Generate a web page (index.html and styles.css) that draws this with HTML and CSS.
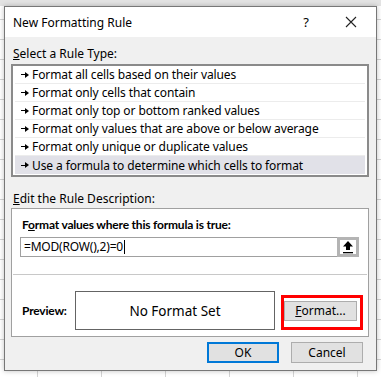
FILE: index.html
```html
<!DOCTYPE html>
<html lang="en">
<head>
    <meta charset="UTF-8">
    <title>New Formatting Rule</title>
    <link rel="stylesheet" href="styles.css">
</head>
<body>
    <div class="dialog">
        <div class="titlebar">
            <span class="title">New Formatting Rule</span>
            <span class="help">?</span>
            <svg class="close" width="12" height="12" viewBox="0 0 12 12">
                <path d="M1 1 L11 11 M11 1 L1 11" stroke="#222" stroke-width="1.1" fill="none"/>
            </svg>
        </div>
        <div class="content">
            <div class="label"><u>S</u>elect a Rule Type:</div>
            <div class="listbox">
                <div class="row"><span class="arrow"></span>Format all cells based on their values</div>
                <div class="row"><span class="arrow"></span>Format only cells that contain</div>
                <div class="row"><span class="arrow"></span>Format only top or bottom ranked values</div>
                <div class="row"><span class="arrow"></span>Format only values that are above or below average</div>
                <div class="row"><span class="arrow"></span>Format only unique or duplicate values</div>
                <div class="row selected"><span class="arrow"></span>Use a formula to determine which cells to format</div>
            </div>

            <div class="label edit-label"><u>E</u>dit the Rule Description:</div>
            <div class="group">
                <div class="bold-label">F<u>o</u>rmat values where this formula is true:</div>
                <div class="formula">
                    <div class="formula-input">=MOD(ROW(),2)=0<span class="caret"></span></div>
                    <div class="collapse-btn">
                        <svg width="12" height="14" viewBox="0 0 12 14">
                            <path d="M6 1 L11 6.5 H8 V10 H4 V6.5 H1 Z" fill="#000"/>
                            <rect x="1" y="12" width="10" height="1.3" fill="#000"/>
                        </svg>
                    </div>
                </div>
                <div class="separator"></div>
                <div class="preview-row">
                    <div class="bold-label preview-label">Preview:</div>
                    <div class="preview-box">No Format Set</div>
                    <div class="format-wrap">
                        <button class="btn format-btn"><u>F</u>ormat...</button>
                        <div class="highlight"></div>
                    </div>
                </div>
            </div>

            <div class="actions">
                <button class="btn default">OK</button>
                <button class="btn">Cancel</button>
            </div>
        </div>
    </div>
</body>
</html>
```

FILE: styles.css
```css
body {
    margin: 0;
    padding: 6px 0 0 4px;
    height: 377px;
    box-sizing: border-box;
    overflow: hidden;
    font-family: "Noto Sans", Arial, sans-serif;
    font-size: 12px;
    color: #000;
    background-color: #fff;
    background-image:
        linear-gradient(#e3e3e3, #e3e3e3),
        repeating-linear-gradient(90deg, transparent 0, transparent 37px, #d4d4d4 37px, #d4d4d4 38px, transparent 38px, transparent 64px),
        repeating-linear-gradient(180deg, transparent 0, transparent 19px, #d4d4d4 19px, #d4d4d4 20px);
    background-size: 100% 6px, 100% 100%, 100% 100%;
    background-repeat: no-repeat, repeat, repeat;
}
.dialog {
    width: 373px;
    height: 365px;
    box-sizing: border-box;
    border: 1px solid #777;
    background-color: #f0f0f0;
    box-shadow: 0 0 5px rgba(0, 0, 0, 0.25);
}
.titlebar {
    height: 30px;
    background-color: #fff;
    display: flex;
    align-items: center;
    padding-left: 8px;
}
.title {
    flex: 1;
    font-size: 12px;
}
.help {
    font-size: 13px;
    margin-right: 36px;
}
.close {
    margin-right: 19px;
}
.content {
    padding: 9px 7px 0 6px;
}
.label {
    line-height: 16px;
    padding-left: 2px;
}
.listbox {
    margin-top: 2px;
    border: 2px solid #8a8a8a;
    background-color: #fff;
    padding: 0 2px 1px;
}
.row {
    height: 17px;
    line-height: 17px;
    border-bottom: 1px solid #ececec;
    padding-left: 6px;
    display: flex;
    align-items: center;
    letter-spacing: -0.1px;
}
.row.selected {
    background-color: #e1e1e8;
    border-bottom: none;
    height: 18px;
}
.arrow {
    display: inline-block;
    width: 8px;
    height: 5px;
    margin-right: 3px;
    background:
        linear-gradient(#000, #000) left center / 5px 1px no-repeat;
    position: relative;
}
.arrow::after {
    content: "";
    position: absolute;
    right: 0;
    top: -0.5px;
    border-left: 4px solid #000;
    border-top: 3px solid transparent;
    border-bottom: 3px solid transparent;
}
.edit-label {
    margin-top: 14px;
}
.group {
    margin-top: 1px;
    border: 1px solid #a0a0a0;
    background-color: #fff;
    padding: 8px 0 6px;
}
.bold-label {
    font-family: Lato, "Noto Sans", sans-serif;
    font-size: 12px;
    font-weight: bold;
    letter-spacing: -0.2px;
    line-height: 16px;
    padding-left: 10px;
}
.formula {
    display: flex;
    margin: 4px 9px 0 8px;
    height: 20px;
}
.formula-input {
    flex: 1;
    border: 1px solid #a0a0a0;
    border-right: none;
    line-height: 18px;
    padding-left: 3px;
    display: flex;
    align-items: center;
    letter-spacing: -0.2px;
}
.caret {
    display: inline-block;
    width: 1px;
    height: 14px;
    margin-left: 1px;
    background-color: #000;
}
.collapse-btn {
    width: 16px;
    height: 14px;
    border: 3px solid #b4b4b4;
    background-color: #fff;
    display: flex;
    align-items: center;
    justify-content: center;
}
.separator {
    margin: 17px 1px 0;
    border-top: 1px solid #c8c8c8;
}
.preview-row {
    display: flex;
    align-items: center;
    margin-top: 16px;
}
.preview-label {
    width: 53px;
}
.preview-box {
    width: 198px;
    height: 37px;
    border: 1px solid #646464;
    display: flex;
    align-items: center;
    justify-content: center;
    font-size: 13.5px;
}
.format-wrap {
    position: relative;
    margin-left: 9px;
}
.btn {
    font-family: "Noto Sans", Arial, sans-serif;
    font-size: 12px;
    color: #000;
    background-color: #e1e1e1;
    border: 1px solid #adadad;
    width: 72px;
    height: 21px;
    padding: 0;
}
.format-btn {
    width: 73px;
    height: 20px;
    display: block;
}
.highlight {
    position: absolute;
    left: -3px;
    top: -6px;
    width: 76px;
    height: 29px;
    border: 3px solid #ff0000;
}
.actions {
    display: flex;
    justify-content: flex-end;
    gap: 12px;
    margin-top: 5px;
    padding-right: 6px;
}
.btn.default {
    border: 2px solid #0078d7;
}
```
